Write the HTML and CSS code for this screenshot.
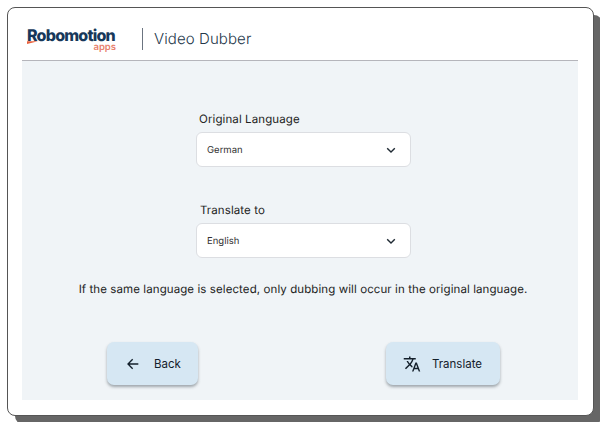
FILE: index.html
```html
<!DOCTYPE html>
<html lang="en">
<head>
<meta charset="utf-8">
<title>Video Dubber</title>
<link rel="stylesheet" href="styles.css">
</head>
<body>
<div class="card">
  <header class="header">
    <div class="logo">
      <span class="logo-name">Robomotion</span>
      <svg class="logo-swoosh" viewBox="0 0 11 3" width="11" height="3"><path d="M0 0.2 L11 0.2 L0 3 Z" fill="#e8603c"/></svg>
      <span class="logo-apps">apps</span>
    </div>
    <div class="divider"></div>
    <div class="title">Video Dubber</div>
  </header>
  <main class="panel">
    <div class="fields">
      <div class="field">
        <label class="label label-first">Original Language</label>
        <div class="select">
          <span>German</span>
          <svg width="12" height="12" viewBox="0 0 12 12"><path d="M2.2 4.2 L6 8 L9.8 4.2" fill="none" stroke="#1f2a33" stroke-width="1.4"/></svg>
        </div>
      </div>
      <div class="field">
        <label class="label label-second">Translate to</label>
        <div class="select">
          <span>English</span>
          <svg width="12" height="12" viewBox="0 0 12 12"><path d="M2.2 4.2 L6 8 L9.8 4.2" fill="none" stroke="#1f2a33" stroke-width="1.4"/></svg>
        </div>
      </div>
    </div>
    <p class="note">If the same language is selected, only dubbing will occur in the original language.</p>
    <div class="actions">
      <button class="btn btn-back">
        <svg width="16" height="16" viewBox="0 0 24 24"><path d="M20 12H5M11.5 5 L4.5 12 L11.5 19" fill="none" stroke="#14202b" stroke-width="2"/></svg>
        <span>Back</span>
      </button>
      <button class="btn btn-translate">
        <svg width="18" height="18" viewBox="0 0 24 24"><path fill="#14202b" d="M12.87 15.07l-2.54-2.51.03-.03A17.5 17.5 0 0 0 14.07 6H17V4h-7V2H8v2H1v2h11.17C11.5 7.92 10.44 9.75 9 11.35 8.07 10.32 7.3 9.19 6.69 8h-2c.73 1.63 1.73 3.17 2.98 4.56l-5.09 5.02L4 19l5-5 3.11 3.11.76-2.04zM18.5 10h-2L12 22h2l1.12-3h4.75L21 22h2l-4.5-12zm-2.62 7l1.62-4.33L19.12 17h-3.24z"/></svg>
        <span>Translate</span>
      </button>
    </div>
  </main>
</div>
</body>
</html>
```
FILE: styles.css
```css
* { box-sizing: border-box; }
html, body { margin: 0; padding: 0; }
body {
  width: 600px;
  height: 422px;
  overflow: hidden;
  background: #fff;
  padding: 7px 6px 0 7px;
  font-family: "Inter", "Liberation Sans", sans-serif;
  color: #14202b;
  text-rendering: geometricPrecision;
}
.card {
  width: 587px;
  height: 409px;
  background: #fff;
  border: 1px solid #555;
  border-radius: 8px;
  box-shadow: 8px 8px 0 #666;
  padding: 0 15px 15px 14px;
  display: flex;
  flex-direction: column;
}
.header {
  height: 52px;
  flex: none;
  display: flex;
  align-items: center;
  padding: 9px 0 0 5px;
}
.logo {
  width: 90px;
  height: 30px;
  position: relative;
  flex: none;
}
.logo-name {
  position: absolute;
  left: 0;
  top: 4px;
  font-size: 16px;
  line-height: 14px;
  font-weight: 800;
  letter-spacing: -0.8px;
  color: #17385a;
}
.logo-swoosh { position: absolute; left: 0; top: 17px; }
.logo-apps {
  position: absolute;
  right: 1px;
  top: 18px;
  font-size: 9.5px;
  line-height: 11px;
  font-weight: 600;
  color: #e8806c;
}
.divider {
  width: 1px;
  height: 22px;
  background: #6b7480;
  margin-left: 25px;
  flex: none;
}
.title {
  margin-left: 11px;
  font-size: 15px;
  font-weight: 300;
  letter-spacing: 0.1px;
  color: #24374a;
}
.panel {
  flex: 1;
  background: #f0f4f7;
  border-top: 1px solid #b5b5bb;
  display: flex;
  flex-direction: column;
  align-items: center;
}
.fields { display: flex; flex-direction: column; gap: 35px; margin-top: 50px; }
.field { width: 215px; margin-left: 7px; }
.label {
  display: block;
  font-size: 11.5px;
  line-height: 16px;
  margin-bottom: 5px;
  letter-spacing: 0.1px;
  color: #222;
}
.label-first { padding-left: 3px; }
.label-second { padding-left: 4px; }
.select {
  height: 35px;
  background: #fff;
  border: 1px solid #dcdee2;
  border-radius: 6px;
  display: flex;
  align-items: center;
  justify-content: space-between;
  padding: 1px 13px 0 10px;
  font-size: 9.5px;
  color: #333;
}
.note {
  margin: 23px 0 0 6px;
  font-size: 11.5px;
  line-height: 16px;
  letter-spacing: 0.09px;
  color: #222;
}
.actions {
  width: 393px;
  margin-top: 45px;
  margin-left: 7px;
  display: flex;
  justify-content: space-between;
}
.btn {
  height: 43px;
  background: #d6e7f3;
  border: none;
  border-radius: 7px;
  box-shadow: 0 2px 3px rgba(60, 70, 80, 0.45);
  display: flex;
  align-items: center;
  font-family: inherit;
  font-size: 11.5px;
  color: #14202b;
  padding: 0;
}
.btn-back { width: 91px; padding-left: 18px; gap: 13px; }
.btn-translate { width: 114px; padding-left: 17px; gap: 11px; }
```
